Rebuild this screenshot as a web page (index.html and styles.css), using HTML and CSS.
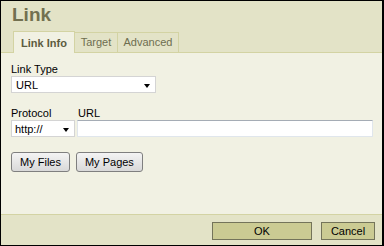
FILE: index.html
```html
<!DOCTYPE html>
<html lang="en">
<head>
    <meta charset="UTF-8">
    <title>Link</title>
    <link rel="stylesheet" href="styles.css">
</head>
<body>

    <div class="dialog">
        <div class="dialog-header">
            <div class="dialog-title">Link</div>
            <div class="tabs">
                <div class="tab tab-info active">Link Info</div>
                <div class="tab tab-target">Target</div>
                <div class="tab tab-advanced">Advanced</div>
            </div>
        </div>

        <div class="dialog-body">
            <label class="field-label">Link Type</label>
            <div class="select select-type">
                <span>URL</span>
                <span class="arrow"></span>
            </div>

            <div class="url-row">
                <div class="field">
                    <label class="field-label">Protocol</label>
                    <div class="select select-protocol">
                        <span>http://</span>
                        <span class="arrow"></span>
                    </div>
                </div>
                <div class="field field-grow">
                    <label class="field-label">URL</label>
                    <input type="text" class="text-input">
                </div>
            </div>

            <div class="browse-row">
                <button class="btn">My Files</button>
                <button class="btn">My Pages</button>
            </div>
        </div>

        <div class="dialog-footer">
            <button class="footer-btn btn-ok">OK</button>
            <button class="footer-btn btn-cancel">Cancel</button>
        </div>
    </div>

</body>
</html>
```

FILE: styles.css
```css
body {
    margin: 0;
    font-family: "Liberation Sans", Arial, sans-serif;
    font-size: 11px;
    color: #000;
}

.dialog {
    width: 384px;
    height: 246px;
    box-sizing: border-box;
    border: 1px solid #000;
    border-right-width: 2px;
    display: flex;
    flex-direction: column;
    background-color: #f1f1e3;
}

.dialog-header {
    height: 51px;
    background-color: #e3e3c7;
    border-bottom: 1px solid #d3d3a3;
    display: flex;
    flex-direction: column;
    padding-left: 11px;
}

.dialog-title {
    font-size: 19px;
    font-weight: bold;
    line-height: 22px;
    color: #727050;
    margin-top: 3px;
}

.tabs {
    display: flex;
    align-items: flex-end;
    margin-top: auto;
    margin-bottom: -1px;
    margin-left: 1px;
}

.tab {
    height: 19px;
    line-height: 19px;
    text-align: center;
    border: 1px solid #d3d3a3;
    border-left: none;
    color: #6e6e50;
    font-size: 11px;
}

.tab-target {
    width: 42px;
}

.tab-advanced {
    width: 60px;
}

.tab.active {
    width: 60px;
    height: 21px;
    line-height: 23px;
    border-left: 1px solid #d3d3a3;
    border-bottom: none;
    background-color: #f1f1e3;
    font-weight: bold;
    color: #5c5c40;
}

.dialog-body {
    flex: 1;
    padding: 10px 9px 0 10px;
}

.field-label {
    display: block;
    line-height: 13px;
}

.select {
    display: flex;
    align-items: center;
    height: 15px;
    background-color: #fff;
    border: 1px solid #d4d4d4;
    padding: 0 5px 0 4px;
}

.select-type {
    width: 134px;
}

.select-protocol {
    width: 54px;
    padding-left: 3px;
}

.arrow {
    margin-left: auto;
    width: 0;
    height: 0;
    border-left: 3px solid transparent;
    border-right: 3px solid transparent;
    border-top: 4px solid #000;
    margin-top: 3px;
}

.url-row {
    display: flex;
    gap: 2px;
    margin-top: 14px;
}

.field-grow {
    flex: 1;
}

.field-grow .field-label {
    padding-left: 1px;
}

.text-input {
    display: block;
    width: 100%;
    height: 17px;
    box-sizing: border-box;
    margin: 0;
    border: 1px solid #e0e6ec;
    border-top-color: #a5acb5;
    background-color: #fff;
}

.browse-row {
    display: flex;
    gap: 6px;
    margin-top: 15px;
}

.btn {
    height: 20px;
    padding: 0 8px;
    font-family: "Liberation Sans", Arial, sans-serif;
    font-size: 11px;
    color: #000;
    border: 1px solid #7f7f7f;
    border-radius: 3px;
    background: linear-gradient(#f4f4f4, #d9d9d9);
}

.dialog-footer {
    height: 30px;
    background-color: #e3e3c7;
    border-top: 1px solid #d3d3a3;
    display: flex;
    justify-content: flex-end;
    align-items: center;
    gap: 9px;
    padding-right: 7px;
}

.footer-btn {
    height: 18px;
    margin-top: 2px;
    font-family: "Liberation Sans", Arial, sans-serif;
    font-size: 11px;
    color: #000;
    background-color: #cbcb93;
    border: 1px solid #74745a;
    padding: 0;
}

.btn-ok {
    width: 100px;
}

.btn-cancel {
    width: 54px;
}
```
